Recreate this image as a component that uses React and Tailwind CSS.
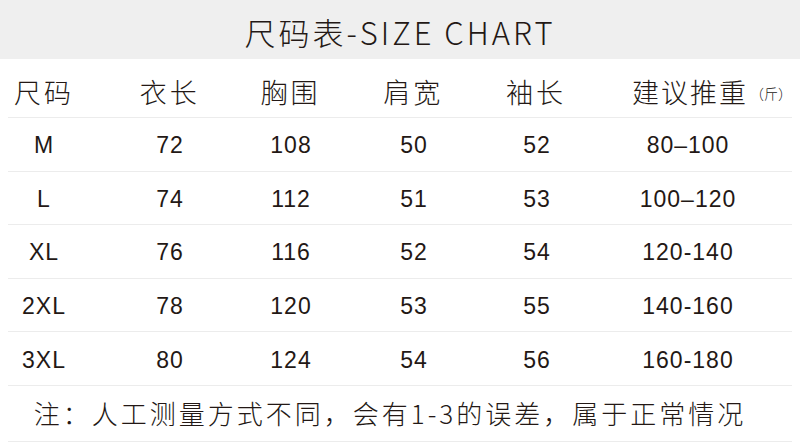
import React from 'react';

const cols = ['w-[72px]', 'w-[180px]', 'w-[62px]', 'w-[184px]', 'w-[62px]', 'flex-1 pl-4'];

const rows = [
  ['M', '72', '108', '50', '52', '80\u2013100'],
  ['L', '74', '112', '51', '53', '100\u2013120'],
  ['XL', '76', '116', '52', '54', '120-140'],
  ['2XL', '78', '120', '53', '55', '140-160'],
  ['3XL', '80', '124', '54', '56', '160-180'],
];

const cjk = { fontFamily: '"Noto Sans CJK SC", "Noto Sans", sans-serif' };

export default function App() {
  return (
    <div className="w-[800px] h-[443px] bg-white text-[#231815] overflow-hidden">
      {/* title band */}
      <div className="h-[59px] bg-[#efefef] flex items-center justify-center">
        <h1 className="text-[31px] font-light leading-none tracking-[3px] pt-1" style={cjk}>
          尺码表-SIZE CHART
        </h1>
      </div>

      <div className="px-2">
        {/* header */}
        <div className="h-[59px] flex items-center pt-[7px] border-b border-[#ececec] font-light text-[27px] leading-none whitespace-nowrap" style={cjk}>
          <div className={`${cols[0]} text-center tracking-[3px]`}>尺码</div>
          <div className={`${cols[1]} text-center tracking-[3px]`}>衣长</div>
          <div className={`${cols[2]} text-center tracking-[3px]`}>胸围</div>
          <div className={`${cols[3]} text-center tracking-[3px]`}>肩宽</div>
          <div className={`${cols[4]} text-center tracking-[3px]`}>袖长</div>
          <div className="flex-1 pl-[65px] flex items-center">
            <span className="tracking-[2px]">建议推重</span>
            <span className="text-[14px] ml-[2px] pt-[2px]">（斤）</span>
          </div>
        </div>

        {/* data rows */}
        {rows.map((r) => (
          <div
            key={r[0]}
            className="h-[53.6px] flex items-center pt-[3px] border-b border-[#ececec] text-[23px] leading-none"
            style={{ fontFamily: '"Liberation Sans", Arial, sans-serif' }}
          >
            {r.map((v, i) => (
              <div key={i} className={`${cols[i]} text-center tracking-[1px]`}>{v}</div>
            ))}
          </div>
        ))}

        {/* footnote */}
        <div className="h-[56px] flex items-center justify-center pr-5 border-b border-[#ececec] font-light text-[26px] leading-none tracking-[3px] whitespace-nowrap" style={cjk}>
          注：人工测量方式不同，会有1-3的误差，属于正常情况
        </div>
      </div>
    </div>
  );
}
